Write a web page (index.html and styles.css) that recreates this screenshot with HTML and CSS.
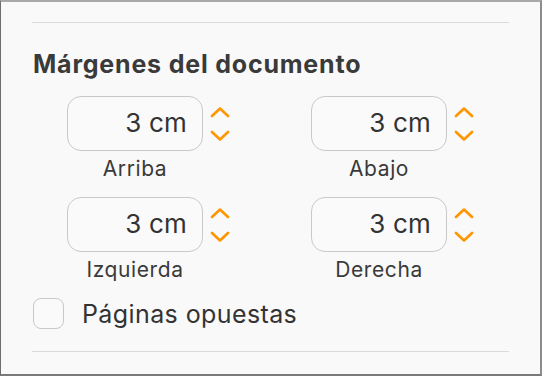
FILE: index.html
```html
<!DOCTYPE html>
<html lang="es">
<head>
<meta charset="utf-8">
<link rel="stylesheet" href="styles.css">
</head>
<body>
<div class="frame">
  <div class="panel">
    <hr class="divider top">
    <h2 class="title">Márgenes del documento</h2>
    <div class="fields">
      <div class="field">
        <div class="control">
          <div class="box">3 cm</div>
          <svg class="stepper" width="20" height="34" viewBox="0 0 20 34"><polyline points="2,9 10,1.5 18,9"/><polyline points="2,25 10,32.5 18,25"/></svg>
        </div>
        <div class="label">Arriba</div>
      </div>
      <div class="field">
        <div class="control">
          <div class="box">3 cm</div>
          <svg class="stepper" width="20" height="34" viewBox="0 0 20 34"><polyline points="2,9 10,1.5 18,9"/><polyline points="2,25 10,32.5 18,25"/></svg>
        </div>
        <div class="label">Abajo</div>
      </div>
      <div class="field">
        <div class="control">
          <div class="box">3 cm</div>
          <svg class="stepper" width="20" height="34" viewBox="0 0 20 34"><polyline points="2,9 10,1.5 18,9"/><polyline points="2,25 10,32.5 18,25"/></svg>
        </div>
        <div class="label">Izquierda</div>
      </div>
      <div class="field">
        <div class="control">
          <div class="box">3 cm</div>
          <svg class="stepper" width="20" height="34" viewBox="0 0 20 34"><polyline points="2,9 10,1.5 18,9"/><polyline points="2,25 10,32.5 18,25"/></svg>
        </div>
        <div class="label">Derecha</div>
      </div>
    </div>
    <label class="check">
      <span class="checkbox"></span>
      <span class="check-text">Páginas opuestas</span>
    </label>
    <hr class="divider bottom">
  </div>
</div>
</body>
</html>
```

FILE: styles.css
```css
html, body {
  margin: 0;
  padding: 0;
}
body {
  width: 542px;
  height: 376px;
  font-family: Inter, "Open Sans", sans-serif;
  color: #333;
}
.frame {
  box-sizing: border-box;
  width: 542px;
  height: 376px;
  background: #f9f9f9;
  border-top: 2px solid #a9a9a9;
  border-left: 1px solid #6e6e6e;
  border-right: 2px solid #8c8c8c;
  border-bottom: 2px solid #7a7a7a;
}
.panel {
  padding: 20px 31px 0 31px;
}
.divider {
  border: none;
  height: 1px;
  background: #dadada;
  margin: 0;
}
.title {
  margin: 26px 0 0 1px;
  font-size: 25px;
  letter-spacing: 0.8px;
  line-height: 30px;
  font-weight: 700;
  color: #3a3a3a;
}
.fields {
  display: grid;
  grid-template-columns: 244px auto;
  row-gap: 16px;
  margin: 17px 0 0 35px;
}
.field {
  display: flex;
  flex-direction: column;
  align-items: flex-start;
}
.control {
  display: flex;
  align-items: center;
  gap: 7px;
}
.box {
  box-sizing: border-box;
  width: 136px;
  height: 55px;
  border: 1.5px solid #c9c9c9;
  border-radius: 14px;
  background: #fafafa;
  text-align: right;
  padding-right: 15px;
  font-size: 26px;
  letter-spacing: 0.2px;
  line-height: 52px;
  color: #333;
}
.stepper {
  fill: none;
  stroke: #ff9500;
  stroke-width: 2.6;
  stroke-linecap: round;
  stroke-linejoin: round;
}
.label {
  width: 136px;
  text-align: center;
  margin-top: 6px;
  font-size: 21px;
  letter-spacing: 0.6px;
  line-height: 24px;
  color: #3a3a3a;
}
.check {
  display: flex;
  align-items: center;
  gap: 18px;
  margin: 16px 0 0 1px;
}
.checkbox {
  box-sizing: border-box;
  width: 31px;
  height: 31px;
  border: 1.5px solid #c9c9c9;
  border-radius: 8px;
  background: #fafafa;
}
.check-text {
  font-size: 25px;
  letter-spacing: 0.4px;
  line-height: 30px;
  color: #333;
}
.divider.bottom {
  margin-top: 22px;
}
```
